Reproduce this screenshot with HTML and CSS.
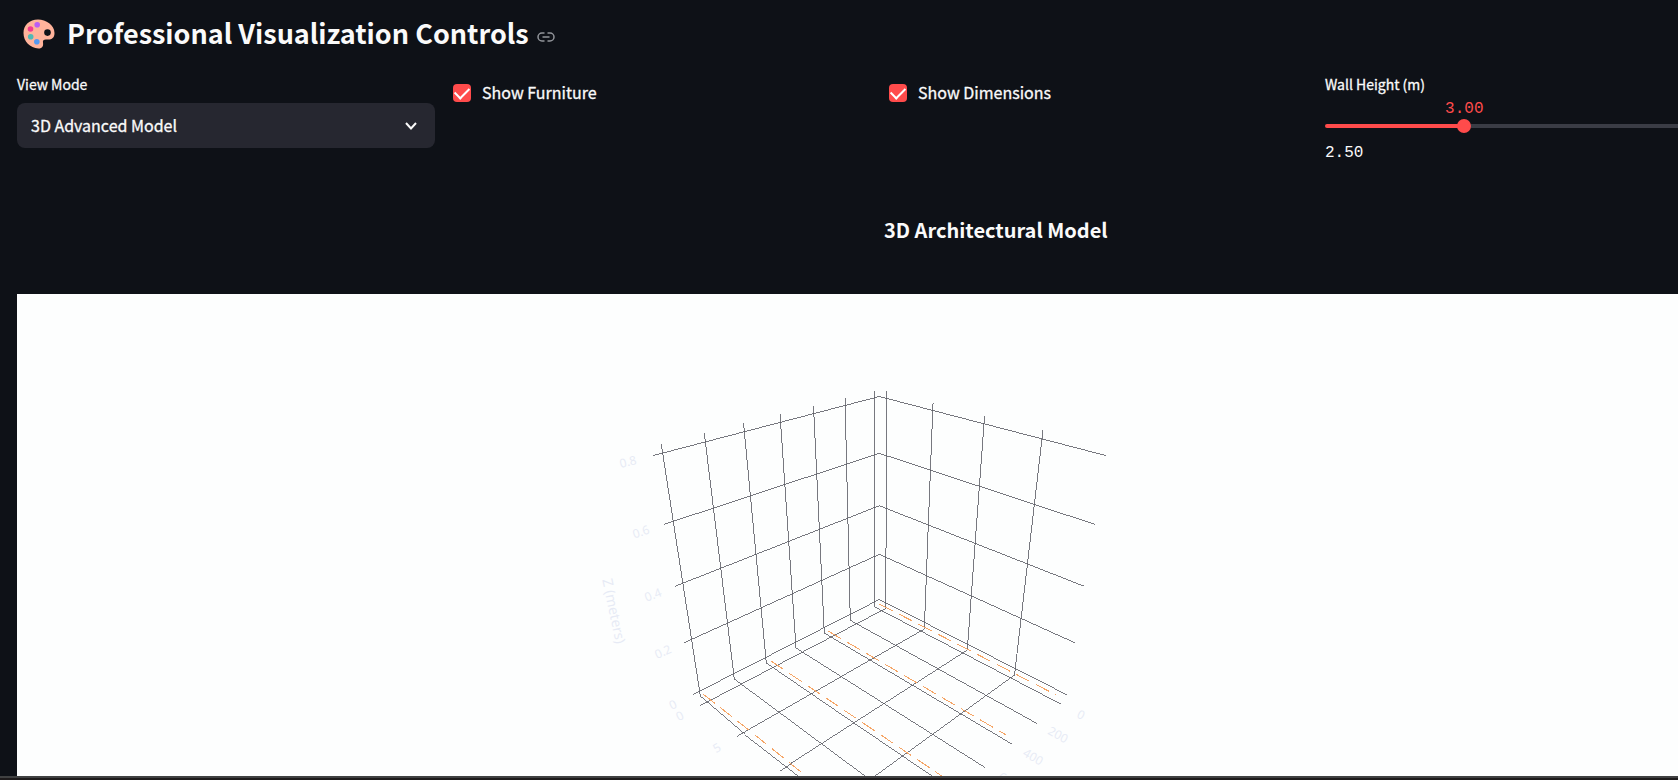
FILE: index.html
```html
<!DOCTYPE html>
<html lang="en">
<head>
<meta charset="utf-8">
<title>Professional Visualization Controls</title>
<link rel="stylesheet" href="styles.css">
</head>
<body>
<main class="app">
  <header class="heading">
    <svg class="palette" viewBox="0 0 32 30" aria-hidden="true">
      <path d="M15 .5C23 .5 31.500 6 31.500 14C31.500 19.500 28 21 24 20.500C21 20.200 19.500 21 20 23.500C20.500 27 19.500 29.500 15.500 29.500C7 29 .5 22.500 .5 14C.5 6 6.500 .5 15 .5Z" fill="#ffb39b"/>
      <circle cx="24.500" cy="13.600" r="3.300" fill="#0e1117"/>
      <circle cx="14.200" cy="5.800" r="2.800" fill="#bb5cf5"/>
      <circle cx="7.500" cy="10" r="2.800" fill="#f53a8e"/>
      <circle cx="7.700" cy="17.800" r="2.800" fill="#4fb9b6"/>
      <circle cx="13.800" cy="22.800" r="2.800" fill="#5498f0"/>
    </svg>
    <h1 class="title">Professional Visualization Controls</h1>
    <a class="anchor" href="#controls" aria-label="Link to heading">
      <svg viewBox="0 0 18 10" fill="none" stroke="currentColor" stroke-width="1.500" aria-hidden="true">
        <path d="M7.500 1H5a4 4 0 0 0 0 8H7.500M10.500 1H13a4 4 0 0 1 0 8H10.500M5.500 5H12.500"/>
      </svg>
    </a>
  </header>

  <section class="controls" id="controls">
    <div class="field">
      <label class="label" for="view">View Mode</label>
      <div class="select-box">
        <select class="select" id="view"><option>3D Advanced Model</option></select>
        <svg class="chevron" viewBox="0 0 12 8" fill="none" stroke="currentColor" stroke-width="2" aria-hidden="true"><path d="M1 1L6 6.500L11 1"/></svg>
      </div>
    </div>
    <label class="check"><input class="box" type="checkbox" checked>Show Furniture</label>
    <label class="check"><input class="box" type="checkbox" checked>Show Dimensions</label>
    <div class="field">
      <label class="label" for="height">Wall Height (m)</label>
      <div class="slider">
        <output class="value" for="height">3.00</output>
        <input class="range" id="height" type="range" min="2.5" max="4" step="0.1" value="3">
      </div>
      <span class="minimum">2.50</span>
    </div>
  </section>

  <section class="figure">
    <h2 class="figure-title">3D Architectural Model</h2>
    <div class="plot">
      <svg class="scene" viewBox="580 294 600 482" role="img" aria-label="3D Architectural Model">
        <g class="grid">
          <path d="M653.300 455.500L879.300 396.500L1105.700 455.500"/>
          <path d="M664.300 524.300L879.300 453.300L1094.700 524.300"/>
          <path d="M675 586.300L879.300 505.700L1084.300 586.300"/>
          <path d="M684.300 642.700L879.300 554.300L1074.700 642.700"/>
          <path d="M692.700 694.700L879.300 599.500L1066.700 694.700"/>
          <path d="M661.300 444.300L700.500 697L745 735L798 776"/>
          <path d="M704.300 433.300L734.300 679L865 776"/>
          <path d="M743.500 423L766.300 663L854 723L932 776"/>
          <path d="M780 414L796 648L984.700 767.300"/>
          <path d="M813.500 406L824.300 633L1012.300 744.300"/>
          <path d="M845 398L850.300 620.300L1037.300 723.700"/>
          <path d="M874.500 391L874.700 607L1061.300 704.300"/>
          <path d="M886.800 391L885.700 608.500L700 705.700"/>
          <path d="M933 402.500L924.300 629L737 736.300"/>
          <path d="M984.500 415.500L967.300 650L779.500 770.700"/>
          <path d="M1043 430L1014.500 675L875 776"/>
        </g>
        <g class="dashes">
          <path d="M879.300 604L1055.700 694.700"/>
          <path d="M828 631L1005.700 734.700"/>
          <path d="M771 661L851.700 715.300L941.700 776"/>
          <path d="M703 694L745 727L806 776"/>
        </g>
        <g class="ticks">
          <text transform="translate(628 462) rotate(-14)" dy="4">0.8</text>
          <text transform="translate(641 532) rotate(-18)" dy="4">0.6</text>
          <text transform="translate(653 595) rotate(-21)" dy="4">0.4</text>
          <text transform="translate(663 652) rotate(-24)" dy="4">0.2</text>
          <text transform="translate(673 705) rotate(-27)" dy="4">0</text>
          <text transform="translate(680 716) rotate(-28)" dy="4">0</text>
          <text transform="translate(717 748) rotate(-30)" dy="4">5</text>
          <text transform="translate(1081 715) rotate(27)" dy="4">0</text>
          <text transform="translate(1058 735) rotate(29)" dy="4">200</text>
          <text transform="translate(1033 757) rotate(31)" dy="4">400</text>
          <text transform="translate(1008 781) rotate(33)" dy="4">600</text>
          <text class="axis" transform="translate(614 611) rotate(78)" dy="5">Z (meters)</text>
        </g>
      </svg>
    </div>
  </section>
</main>
<footer class="strip"></footer>
</body>
</html>
```
FILE: styles.css
```css
* { box-sizing: border-box; }

body {
  margin: 0;
  height: 100vh;
  display: flex;
  flex-direction: column;
  overflow: hidden;
  background: #0e1117;
  color: #fafafa;
  font-family: "Noto Sans CJK SC", "Noto Sans", sans-serif;
}

.app {
  flex: 1;
  min-height: 0;
  display: flex;
  flex-direction: column;
  padding-left: 17px;
  margin-right: -65px;
}

.heading {
  display: flex;
  align-items: center;
  height: 68px;
  padding-left: 6px;
}

.palette { width: 32px; height: 30px; margin-right: 12px; }

.title {
  margin: 0;
  padding-bottom: 2px;
  font-size: 27px;
  line-height: 36px;
  font-weight: 600;
}

.anchor { color: #92959b; margin: 5px 0 0 8px; display: flex; }
.anchor svg { width: 18px; height: 10px; }

.controls {
  display: grid;
  grid-template-columns: repeat(4, 1fr);
  gap: 18px;
  align-items: start;
  height: 127px;
  padding-top: 6px;
}

.field { display: flex; flex-direction: column; }

.label {
  font-size: 14px;
  line-height: 20px;
  margin-bottom: 9px;
}

.label, .select, .check { -webkit-text-stroke: 0.3px currentColor; }

.select-box {
  position: relative;
  display: flex;
  align-items: center;
}

.select {
  appearance: none;
  width: 100%;
  height: 45px;
  padding: 0 14px 2px;
  border: 0;
  border-radius: 8px;
  background: #262730;
  color: inherit;
  font-family: inherit;
  font-size: 16px;
}

.chevron {
  position: absolute;
  right: 18px;
  width: 12px;
  height: 8px;
  pointer-events: none;
}

.check {
  display: flex;
  align-items: center;
  gap: 11px;
  padding-top: 6px;
  font-size: 16px;
  line-height: 24px;
}

.box {
  appearance: none;
  display: grid;
  place-items: center;
  width: 18px;
  height: 18px;
  margin: 2px 0 0;
  border-radius: 4px;
  background: #ff4b4b;
}

.box:checked::before {
  content: "";
  width: 12px;
  height: 7px;
  border: solid #fff;
  border-width: 0 0 2px 2px;
  transform: translateY(-2px) rotate(-45deg);
}

.slider {
  position: relative;
  display: flex;
  align-items: center;
  height: 45px;
  margin-bottom: -5px;
}

.slider::before {
  content: "";
  width: 100%;
  height: 4px;
  border-radius: 4px;
  background: linear-gradient(to right, #ff4b4b 33.33%, #3a3c45 33.33%);
}

.range {
  position: absolute;
  appearance: none;
  left: -7px;
  right: -7px;
  width: calc(100% + 14px);
  height: 14px;
  margin: 0;
  background: transparent;
}

.range::-webkit-slider-thumb {
  appearance: none;
  width: 14px;
  height: 14px;
  border-radius: 50%;
  background: #ff4b4b;
}

.value {
  position: absolute;
  left: 33.33%;
  bottom: 29px;
  transform: translateX(-50%);
  color: #ff4b4b;
}

.value, .minimum {
  font-family: "Liberation Mono", monospace;
  font-size: 16px;
  line-height: 20px;
}

.figure {
  flex: 1;
  min-height: 0;
  display: flex;
  flex-direction: column;
}

.figure-title {
  margin: 0;
  height: 99px;
  padding: 19px 0 0 50%;
  text-indent: 4px;
  font-size: 20px;
  line-height: 32px;
  font-weight: 700;
}

.plot {
  flex: 1;
  min-height: 0;
  display: flex;
  justify-content: center;
  align-items: flex-start;
  overflow: hidden;
  background: #fdfefe;
}

.scene { flex: none; width: 600px; height: 482px; }

.grid, .dashes { fill: none; shape-rendering: crispEdges; }
.grid { stroke: #55565f; stroke-width: 0.8; }
.dashes { stroke: #f5a566; stroke-width: 1; stroke-dasharray: 15 7; }

.ticks {
  fill: #e6eaf5;
  font-family: "Open Sans", sans-serif;
  font-size: 12px;
  text-anchor: middle;
}

.ticks .axis { font-size: 14px; }

.strip {
  flex: none;
  height: 4px;
  border-top: 2px solid #404142;
  background: #1e1b1c;
}
```
